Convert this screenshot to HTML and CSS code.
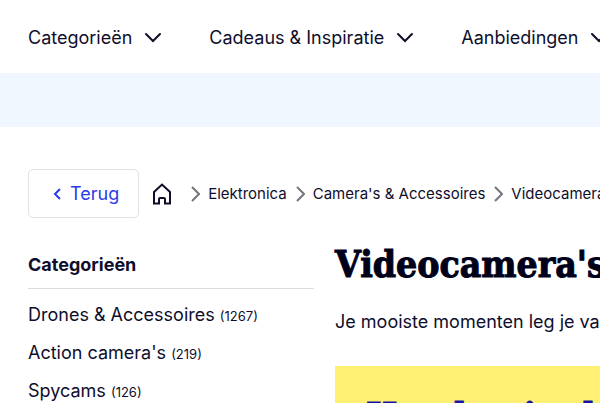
FILE: index.html
```
<!DOCTYPE html>
<html lang="nl">
<head>
    <meta charset="UTF-8">
    <title>Videocamera's</title>
    <link rel="stylesheet" href="styles.css">
</head>

<body>
    <!-- hoofdmenu -->
    <nav class="mainnav">
        <ul>
            <li><a href="#">Categorieën
                <svg class="chev" viewBox="0 0 18 12"><path d="M2 2l7 7 7-7"/></svg></a></li>
            <li><a href="#">Cadeaus &amp; Inspiratie
                <svg class="chev" viewBox="0 0 18 12"><path d="M2 2l7 7 7-7"/></svg></a></li>
            <li><a href="#">Aanbiedingen
                <svg class="chev" viewBox="0 0 18 12"><path d="M2 2l7 7 7-7"/></svg></a></li>
        </ul>
    </nav>
    <div class="usp"></div>

    <div class="page">
        <!-- kruimelpad -->
        <div class="crumbbar">
            <a class="back" href="#">
                <svg viewBox="0 0 8 14"><path d="M7 2L2 7l5 5"/></svg>Terug
            </a>
            <ol class="crumbs">
                <li><a href="#" aria-label="Home">
                    <svg class="home" viewBox="0 0 20 22"><path d="M2 9l8-7.500L18 9v11.500h-5V16q0-1-1-1h-4q-1 0-1 1v4.500H2z"/></svg></a></li>
                <li><svg class="sep" viewBox="0 0 9 16"><path d="M1 1l7 7-7 7"/></svg><a href="#">Elektronica</a></li>
                <li><svg class="sep" viewBox="0 0 9 16"><path d="M1 1l7 7-7 7"/></svg><a href="#">Camera's &amp; Accessoires</a></li>
                <li><svg class="sep" viewBox="0 0 9 16"><path d="M1 1l7 7-7 7"/></svg><a href="#">Videocamera's</a></li>
            </ol>
        </div>

        <div class="cols">
            <aside class="side">
                <h2>Categorieën</h2>
                <ul>
                    <li><a href="#">Drones &amp; Accessoires <small>(1267)</small></a></li>
                    <li><a href="#">Action camera's <small>(219)</small></a></li>
                    <li><a href="#">Spycams <small>(126)</small></a></li>
                </ul>
            </aside>
            <main class="main">
                <h1>Videocamera's</h1>
                <p>Je mooiste momenten leg je vast</p>
                <section class="promo">
                    <h2>Handen in de</h2>
                </section>
            </main>
        </div>
    </div>
</body>
</html>
```
FILE: styles.css
```
html,
body,
ul,
ol,
h1,
h2,
p {
    margin: 0;
    padding: 0;
}

html,
body {
    height: 100%;
}

body {
    overflow: hidden;
    background: #fff;
    color: #0e0e2c;
    font: 18px/24px Inter, "Liberation Sans", sans-serif;
    white-space: nowrap;
}

ul,
ol {
    list-style: none;
}

a {
    color: inherit;
    text-decoration: none;
}

svg {
    flex: none;
    fill: none;
    stroke: currentColor;
    stroke-width: 2;
}

/* hoofdmenu */
.mainnav ul {
    display: flex;
    gap: 47px;
    padding: 26px 28px 23px;
}

.mainnav a {
    display: flex;
    align-items: center;
    gap: 12px;
}

.chev {
    width: 18px;
    height: 12px;
    stroke-linecap: round;
}

.usp {
    height: 54px;
    background: #f0f6ff;
}

.page {
    padding: 42px 0 0 28px;
}

/* kruimelpad */
.crumbbar {
    display: flex;
    align-items: center;
    gap: 13px;
}

.back {
    display: flex;
    align-items: center;
    gap: 9px;
    padding: 12px 19px 11px 24px;
    border: 1px solid #e2e2e4;
    border-radius: 5px;
    color: #2a3be8;
}

.back svg {
    width: 8px;
    height: 14px;
}

.crumbs {
    display: flex;
    align-items: center;
    gap: 9px;
    font-size: 15px;
}

.crumbs li,
.crumbs a {
    display: flex;
    align-items: center;
    gap: 8px;
}

.home {
    width: 20px;
    height: 22px;
    margin-right: 10px;
}

.sep {
    width: 9px;
    height: 16px;
    color: #75757f;
}

/* kolommen */
.cols {
    display: flex;
    gap: 21px;
    padding-top: 22px;
}

.side {
    flex: 0 0 50%;
}

.side h2 {
    margin-bottom: 7px;
    padding: 13px 0 11px;
    border-bottom: 1px solid #dcdcde;
    font-size: 18px;
    line-height: 24px;
}

.side li {
    padding: 7px 0;
}

.side small {
    font-size: 13px;
    line-height: 16px;
}

.main {
    flex: 1;
}

h1,
.promo h2 {
    font-family: "DejaVu Serif Condensed", "DejaVu Serif", serif;
    font-size: 37px;
    font-weight: bold;
    line-height: 48px;
    -webkit-text-stroke: 1px currentColor;
}

h1 {
    color: #000019;
}

.main p {
    padding: 22px 0 32px;
}

.promo {
    padding: 26px 31px;
    background: #fff073;
    color: #1414a0;
}
```
